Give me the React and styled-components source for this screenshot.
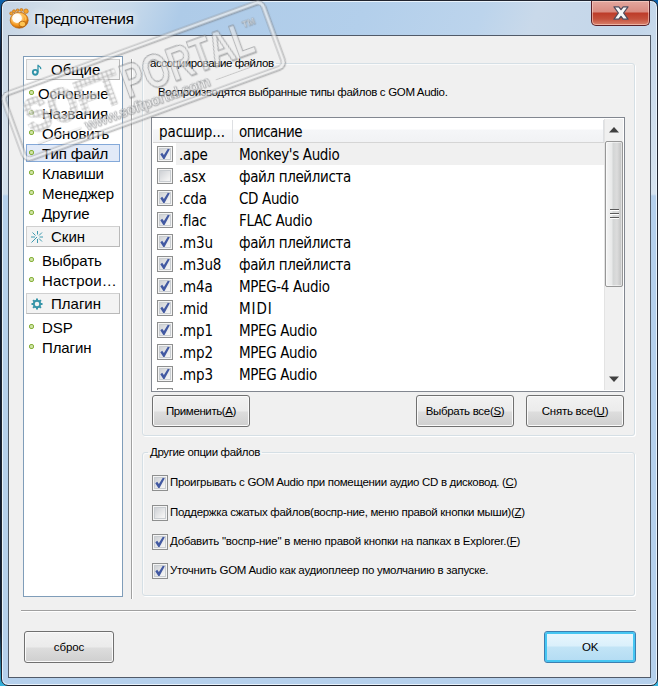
import React from 'react';
import styled, { createGlobalStyle, css } from 'styled-components';

const GlobalStyle = createGlobalStyle`
  *, *::before { box-sizing: border-box; }
  body {
    margin: 0;
    overflow: hidden;
    background: #1a76b8;
    font-family: 'Liberation Sans', Arial, sans-serif;
    font-size: 11.5px;
    color: #000;
  }
`;

const Desktop = styled.div`
  position: relative;
  width: 658px;
  height: 686px;
  background: linear-gradient(180deg, #0d62ac 0%, #101c33 8%, #101c33 92%, #35b4e0 100%);
`;

const Window = styled.div`
  width: 657px;
  height: 686px;
  margin-left: 1px;
  padding: 1px 6px 7px;
  border: 1px solid #20242f;
  border-radius: 7px;
  box-shadow: inset 0 0 0 1px #e9f3fc;
  background:
    linear-gradient(180deg, transparent 0 193px, #b5d0ec 195px),
    linear-gradient(112deg, #c3d3e4 0, #d5e0ea 60px, #c8daeb 120px, #aecbe8 170px, #b3cfeb 340px, #bcd4ec 450px, #c9d9ea 500px, #c3d6ea 600px, #d9e5f0 690px);
`;

const TitleBar = styled.header`
  display: flex;
  height: 33px;
  align-items: flex-start;
  justify-content: space-between;
`;

const TitleGroup = styled.div`
  display: flex;
  align-items: center;
  gap: 5px;
  padding: 5px 0 0 1px;
`;

const Title = styled.h1`
  margin: 0;
  font: 15px/22px 'Noto Sans', sans-serif;
  letter-spacing: -0.55px;
  text-shadow: 0 0 8px #fff, 0 0 8px #fff;
`;

const CloseButton = styled.button`
  display: flex;
  align-items: center;
  justify-content: center;
  width: 59px;
  height: 25px;
  margin: -1px 1px 0 0;
  padding: 0;
  border: 1px solid #5a2028;
  border-top: 0;
  border-radius: 0 0 5px 5px;
  background: linear-gradient(180deg, #e3a79f 0, #d98b80 11px, #bd3b29 12px, #c4503c 18px, #dd8a74 25px);
  box-shadow: inset 0 0 0 1px rgba(255, 220, 210, 0.55);
`;

const Client = styled.main`
  display: flex;
  flex-direction: column;
  width: 643px;
  height: 643px;
  padding: 20px 13px 0;
  border: 1px solid #515a68;
  background: #f0f0f0;
`;

const Body = styled.div`
  display: flex;
  height: 542px;
`;

const Sidebar = styled.nav`
  width: 100px;
  height: 541px;
  margin-left: 1px;
  padding: 2px;
  border: 1px solid #7f9db9;
  background: #fff;
`;

const SectionHead = styled.div`
  display: flex;
  align-items: center;
  width: 94px;
  height: 21px;
  margin: ${p => (p.$first ? '0 0 3px' : '3px 0 3px')};
  padding-left: 4px;
  border: 1px solid #b9b9b9;
  border-top-color: #d0d0d0;
  border-left-color: #d0d0d0;
  background: #f3f3f3;
  font-size: 15px;

  svg { width: 12px; height: 12px; margin-right: 8px; flex: none; }
`;

const NavItem = styled.div`
  display: flex;
  align-items: center;
  width: 94px;
  height: 20px;
  padding-left: 3px;
  font-size: 15px;
  white-space: nowrap;
  letter-spacing: ${p => p.$ls || -0.1}px;

  &::before {
    content: '';
    width: 5px;
    height: 5px;
    margin: -1px ${p => (p.$tight ? 4 : 8)}px 0 0;
    border: 1.5px solid #86b03a;
    border-radius: 2px;
    background: #cfe3a4;
    flex: none;
  }

  ${p => p.$active && css`
    height: 18px;
    margin: 1px 0;
    padding-left: 2px;
    border: 1px solid #84a9d9;
    background: #e2eaf8;
  `}
`;

const Divider = styled.div`
  width: 2px;
  height: 540px;
  margin: 3px 9px 0 8px;
  border-left: 1px solid #a0a0a0;
  background: #fff;
`;

const Panels = styled.section`
  display: flex;
  flex-direction: column;
  gap: 9px;
  width: 494px;
`;

const Group = styled.fieldset`
  flex: none;
  width: 493px;
  height: ${p => p.$h}px;
  min-width: 0;
  margin: 0;
  padding: ${p => p.$pad};
  border: 1px solid #d5dfe5;
  border-radius: 3px;
  box-shadow: 1px 1px 0 #fff, inset 1px 1px 0 #fafafa;
`;

const Legend = styled.legend`
  height: 14px;
  margin-left: ${p => p.$x || 0}px;
  padding: 0 2px;
  line-height: 14px;
  white-space: nowrap;
  letter-spacing: ${p => p.$ls}px;
`;

const Hint = styled.p`
  margin: 0 0 18px 7px;
  line-height: 14px;
  white-space: nowrap;
  letter-spacing: -0.33px;
`;

const ListView = styled.div`
  display: flex;
  width: 474px;
  height: 275px;
  padding: 1px;
  border: 1px solid #828790;
  background: #fff;
`;

const Table = styled.div`
  width: 451px;
  height: 271px;
  padding-top: 1px;
  overflow: hidden;
  font-family: 'DejaVu Sans Condensed', 'DejaVu Sans', sans-serif;
  font-size: 15px;
`;

const HeadRow = styled.div`
  display: flex;
  height: 23px;
  border-bottom: 1px solid #d5d5d5;
  background: linear-gradient(180deg, #fff 0 9px, #f5f6f8 10px, #f1f2f4);
`;

const HeadCell = styled.div`
  width: ${p => p.$w}px;
  padding-left: 6px;
  border-right: 1px solid #dee0e3;
  line-height: 25px;
  letter-spacing: ${p => p.$ls}px;
`;

const Row = styled.div`
  display: flex;
  align-items: center;
  height: 22px;
  padding-left: 4px;
  background: ${p => (p.$selected ? 'linear-gradient(90deg, #fff 23px, #f0f0f0 23px)' : '#fff')};
`;

const Ext = styled.span`
  width: 61px;
  padding: 2px 0 0 6px;
  letter-spacing: -0.2px;
`;

const Desc = styled.span`
  padding: 2px 0 0 5px;
  white-space: nowrap;
  letter-spacing: ${p => p.$ls || -0.36}px;
`;

const Box = styled.span`
  display: flex;
  align-items: center;
  justify-content: center;
  flex: none;
  width: 16px;
  height: 16px;
  border: 1px solid #8e8f8f;
  background: linear-gradient(135deg, #c6c9ce, #f3f3f3 75%);
  box-shadow: inset 0 0 0 1px #f4f4f4, inset 0 0 0 2px #c9cdd1;
`;

const ScrollBar = styled.div`
  display: flex;
  flex-direction: column;
  align-items: center;
  width: 19px;
  height: 271px;
  background: #f0f0f0;
  border-left: 1px solid #e3e3e3;
`;

const ScrollArrow = styled.div`
  display: flex;
  align-items: center;
  justify-content: center;
  height: 22px;
`;

const Thumb = styled.div`
  display: flex;
  flex-direction: column;
  align-items: center;
  justify-content: center;
  gap: 2px;
  width: 18px;
  height: 146px;
  margin-bottom: auto;
  border: 1px solid #979797;
  border-radius: 2px;
  background: linear-gradient(90deg, #f4f4f4, #e8e9e9 6px, #d3d5d5 7px, #dcdcdc 11px, #bfc0c0);
  box-shadow: inset 0 0 0 1px rgba(255, 255, 255, 0.5);
`;

const Grip = styled.i`
  width: 9px;
  height: 2px;
  border-top: 1px solid #5a5a5a;
  background: #fff;
`;

const ButtonRow = styled.div`
  display: flex;
  gap: 12px;
  margin-top: 3px;
  padding-left: 1px;
`;

const Button = styled.button`
  flex: none;
  width: ${p => p.$w || 98}px;
  height: 32px;
  margin-right: ${p => p.$push || 0}px;
  padding: 0;
  border: 1px solid #707070;
  border-radius: 3px;
  background: linear-gradient(180deg, #f2f2f2 0, #ebebeb 15px, #dddddd 16px, #cfcfcf 100%);
  box-shadow: inset 0 0 0 1px #fafafa;
  color: #000;
  font: 11.5px 'Liberation Sans', Arial, sans-serif;
  letter-spacing: ${p => p.$ls || 0}px;
  white-space: nowrap;

  ${p => p.$primary && css`
    border-color: #3c7fb1;
    background: linear-gradient(180deg, #eaf6fd 0, #daf0fb 14px, #c2e4f6 15px, #b3dcf3 100%);
    box-shadow: inset 0 0 0 2px #46c6f2;
  `}
`;

const Option = styled.label`
  display: flex;
  align-items: center;
  gap: 2px;
  height: 16px;
  margin-bottom: ${p => p.$gap || 13}px;
  white-space: nowrap;
  letter-spacing: ${p => p.$ls}px;

  & > span:last-child { margin-top: -2px; }
`;

const Footer = styled.footer`
  display: flex;
  justify-content: space-between;
  width: 615px;
  height: 55px;
  margin: 12px 0 0 -1px;
  padding: 20px 0 0 3px;
  border-top: 1px solid #a0a0a0;
  box-shadow: inset 0 1px 0 #fff;
`;

const Stamp = styled.svg`
  position: absolute;
  left: 0;
  top: 0;
  overflow: visible;
  pointer-events: none;
`;

const AppIcon = () => (
  <svg width="20" height="21" viewBox="0 0 20 21">
    <defs>
      <radialGradient id="ball" cx="0.4" cy="0.35" r="0.7">
        <stop offset="0" stopColor="#fffdf0" />
        <stop offset="0.35" stopColor="#ffd080" />
        <stop offset="0.7" stopColor="#f08f14" />
        <stop offset="1" stopColor="#a85004" />
      </radialGradient>
    </defs>
    <g fill="#f6a52c" stroke="#b8630c" strokeWidth="0.6">
      <ellipse cx="2.200" cy="5.400" rx="1.500" ry="1.600" />
      <ellipse cx="5" cy="3.200" rx="1.500" ry="1.400" />
      <ellipse cx="8.600" cy="2.200" rx="1.500" ry="1.300" />
      <ellipse cx="12.400" cy="2" rx="1.600" ry="1.400" />
      <ellipse cx="17" cy="3.200" rx="2.300" ry="2.300" />
    </g>
    <ellipse cx="10.200" cy="12.200" rx="9" ry="8" fill="url(#ball)" stroke="#b96205" strokeWidth="0.7" />
    <circle cx="8" cy="10.200" r="4.800" fill="#fff" opacity="0.9" />
    <path d="M13 6.500c3 1 4.500 3 3.500 6" fill="none" stroke="#ffc050" strokeWidth="1.600" />
    <ellipse cx="13.400" cy="16" rx="3.400" ry="2.800" fill="#ffc451" stroke="#a95707" strokeWidth="0.7" />
  </svg>
);

const CloseIcon = () => (
  <svg width="16" height="14" viewBox="0 0 16 14">
    <path
      d="M1 .8h4.800L8 3.700 10.200.8H15l-4.400 6.200L15 13.200h-4.800L8 10.300l-2.200 2.900H1l4.400-6.200z"
      fill="#f6f6f6"
      stroke="#4d4a5c"
      strokeWidth="1.200"
      strokeLinejoin="round"
    />
  </svg>
);

const Check = () => (
  <svg width="12" height="12" viewBox="0 0 12 12">
    <path d="M1.300 6.200l1.900-1.400 1.700 2.300L8.800.8l2 .5L5.500 11H4.300z" fill="#4259a2" />
  </svg>
);

const NoteIcon = () => (
  <svg viewBox="0 0 12 12" fill="none" stroke="#3093a8">
    <circle cx="4.200" cy="8.300" r="2.400" strokeWidth="1.900" />
    <path d="M7 8.500V.8M7 1.200c.4 1.300 3.200 1 2.800 4" strokeWidth="1.300" />
  </svg>
);

const WandIcon = () => (
  <svg viewBox="0 0 12 12" fill="none" stroke="#3f9bb0" strokeWidth="1">
    <path d="M.5 11.500L6 6M6.500 0v3.500M6.500 8v4M1.500 1.500l3 3M11 1.500l-3 3M8 7.500l3 3M0 6h4M8.500 6H12" />
  </svg>
);

const GearIcon = () => (
  <svg viewBox="0 0 12 12" fill="none" stroke="#3795a9">
    <circle cx="6" cy="6" r="3.200" strokeWidth="1.900" />
    <path d="M6 .5v2M6 9.500v2M.5 6h2M9.500 6h2M2.100 2.100l1.400 1.400M8.500 8.500l1.400 1.400M2.100 9.900l1.400-1.400M8.500 3.500l1.400-1.400" strokeWidth="2" />
  </svg>
);

const Watermark = () => (
  <Stamp width="300" height="180" viewBox="0 0 300 180">
    <defs>
      <pattern id="cells" width="4.600" height="4.600" patternUnits="userSpaceOnUse">
        <rect width="4.600" height="4.600" fill="#8f8f8f" fillOpacity="0.9" />
        <rect x="0.500" y="0.500" width="3.600" height="3.600" fill="#f6f6f6" />
      </pattern>
      <filter id="edge" x="-20%" y="-30%" width="140%" height="160%">
        <feDropShadow dx="0.3" dy="0.7" stdDeviation="0.6" floodColor="#555" floodOpacity="0.6" />
      </filter>
    </defs>
    <g transform="translate(144 82) rotate(-20)" filter="url(#edge)" opacity="0.66" fontFamily="'Liberation Sans', Arial, sans-serif">
      <rect x="-138" y="-36" width="276" height="69" rx="6" fill="none" stroke="#777a7e" strokeWidth="4.600" />
      <rect x="-138" y="-36" width="276" height="69" rx="6" fill="none" stroke="#efefef" strokeWidth="3.200" />
      <text x="-124" y="10" fontSize="48" fontWeight="700" textLength="100" lengthAdjust="spacingAndGlyphs" fill="url(#cells)" stroke="url(#cells)" strokeWidth="1.500">SOFT</text>
      <text x="-21" y="10" fontSize="49" fontWeight="700" textLength="138" lengthAdjust="spacingAndGlyphs" fill="#f2f2f2" fillOpacity="0.85" stroke="#777a7e" strokeWidth="0.9">PORTAL</text>
      <text x="112" y="-17" fontSize="9" fontWeight="700" fill="#f4f4f4" stroke="#888" strokeWidth="0.4">TM</text>
      <text x="-70" y="26" fontSize="15" fontWeight="700" textLength="132" fill="#f4f4f4" stroke="#777a7e" strokeWidth="0.600">www.softportal.com</text>
      <path d="M-121 21h46M68 21h37" stroke="#efefef" strokeWidth="2" />
    </g>
  </Stamp>
);

const files = [
  ['.ape', "Monkey's Audio", true],
  ['.asx', 'файл плейлиста', false],
  ['.cda', 'CD Audio', true],
  ['.flac', 'FLAC Audio', true],
  ['.m3u', 'файл плейлиста', true],
  ['.m3u8', 'файл плейлиста', true],
  ['.m4a', 'MPEG-4 Audio', true],
  ['.mid', 'MIDI', true, 0.9],
  ['.mp1', 'MPEG Audio', true],
  ['.mp2', 'MPEG Audio', true],
  ['.mp3', 'MPEG Audio', true],
  ['', '', false],
];

const App = () => {
  return (
    <Desktop>
      <GlobalStyle />
      <Window>
        <TitleBar>
          <TitleGroup>
            <AppIcon />
            <Title>Предпочтения</Title>
          </TitleGroup>
          <CloseButton aria-label="Закрыть"><CloseIcon /></CloseButton>
        </TitleBar>

        <Client>
          <Body>
            <Sidebar>
              <SectionHead $first><NoteIcon />Общие</SectionHead>
              <NavItem $tight>Основные</NavItem>
              <NavItem>Названия</NavItem>
              <NavItem>Обновить</NavItem>
              <NavItem $active>Тип файл</NavItem>
              <NavItem>Клавиши</NavItem>
              <NavItem>Менеджер</NavItem>
              <NavItem>Другие</NavItem>
              <SectionHead><WandIcon />Скин</SectionHead>
              <NavItem>Выбрать</NavItem>
              <NavItem $ls={0.15}>Настрои…</NavItem>
              <SectionHead><GearIcon />Плагин</SectionHead>
              <NavItem>DSP</NavItem>
              <NavItem>Плагин</NavItem>
            </Sidebar>

            <Divider />

            <Panels>
              <Group $h={380} $pad="15px 8px 0">
                <Legend $x={-3} $ls={-0.45}>ассоциирование файлов</Legend>
                <Hint>Воспроизводятся выбранные типы файлов с GOM Audio.</Hint>
                <ListView>
                  <Table>
                    <HeadRow>
                      <HeadCell $w={80} $ls={-0.1}>расшир...</HeadCell>
                      <HeadCell $w={371} $ls={-0.55}>описание</HeadCell>
                    </HeadRow>
                    {files.map(([ext, desc, checked, ls], i) => (
                      <Row key={i} $selected={i === 0}>
                        <Box>{checked && <Check />}</Box>
                        <Ext>{ext}</Ext>
                        <Desc $ls={ls}>{desc}</Desc>
                      </Row>
                    ))}
                  </Table>
                  <ScrollBar>
                    <ScrollArrow>
                      <svg width="10" height="6"><path d="M0 5.500L5 0l5 5.500z" fill="#404040" /></svg>
                    </ScrollArrow>
                    <Thumb><Grip /><Grip /><Grip /></Thumb>
                    <ScrollArrow>
                      <svg width="10" height="6"><path d="M0 .5L5 6l5-5.500z" fill="#404040" /></svg>
                    </ScrollArrow>
                  </ScrollBar>
                </ListView>
                <ButtonRow>
                  <Button $push={154} $ls={-0.39}>Применить(<u>A</u>)</Button>
                  <Button $ls={-0.31}>Выбрать все(<u>S</u>)</Button>
                  <Button $ls={-0.25}>Снять все(<u>U</u>)</Button>
                </ButtonRow>
              </Group>

              <Group $h={151} $pad="16px 9px 0">
                <Legend $x={-4} $ls={-0.36}>Другие опции файлов</Legend>
                <Option $gap={14} $ls={-0.32}><Box><Check /></Box><span>Проигрывать с GOM Audio при помещении аудио CD в дисковод. (<u>C</u>)</span></Option>
                <Option $ls={-0.3}><Box /><span>Поддержка сжатых файлов(воспр-ние, меню правой кнопки мыши)(<u>Z</u>)</span></Option>
                <Option $ls={-0.23}><Box><Check /></Box><span>Добавить "воспр-ние" в меню правой кнопки на папках в Explorer.(<u>F</u>)</span></Option>
                <Option $ls={-0.26}><Box><Check /></Box><span>Уточнить GOM Audio как аудиоплеер по умолчанию в запуске.</span></Option>
              </Group>
            </Panels>
          </Body>

          <Footer>
            <Button $w={90} $ls={-0.1}>сброс</Button>
            <Button $w={92} $ls={-0.3} $primary>OK</Button>
          </Footer>
        </Client>
      </Window>
      <Watermark />
    </Desktop>
  );
};

export default App;
